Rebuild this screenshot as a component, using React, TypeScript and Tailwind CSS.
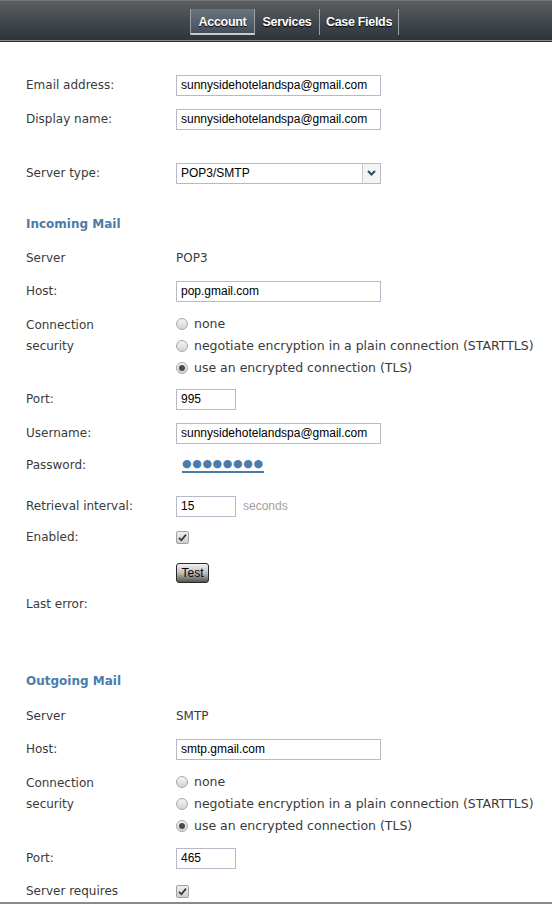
import type { ReactNode } from 'react'

const label = "font-['DejaVu_Sans',sans-serif] text-[12px] text-[#3a3a3a]"
const inputText = "font-['Liberation_Sans',Arial,sans-serif] text-[12px] text-black"

function Row({ name, mt, children }: { name: string; mt: string; children?: ReactNode }) {
  return (
    <div className={`flex h-[24px] items-center ${mt}`}>
      <div className={`w-[150px] shrink-0 ${label}`}>{name}</div>
      <div className="flex items-center">{children}</div>
    </div>
  )
}

function TextBox({ value, wide = true }: { value: string; wide?: boolean }) {
  return (
    <div
      className={`flex h-[21px] items-center border border-[#b8b8c8] bg-white pl-[4px] ${
        wide ? 'w-[205px]' : 'w-[60px]'
      } ${inputText}`}
    >
      {value}
    </div>
  )
}

function Radio({ checked, text }: { checked?: boolean; text: string }) {
  return (
    <div className="flex h-[22px] items-center">
      <span className="flex h-[12px] w-[12px] items-center justify-center rounded-full border border-[#a8a8a8] bg-gradient-to-b from-[#f4f4f4] to-[#d4d4d4]">
        {checked && <span className="h-[6px] w-[6px] rounded-full bg-[#4a4a4a]" />}
      </span>
      <span className="ml-[6px] font-['DejaVu_Sans',sans-serif] text-[12.5px] text-[#3a3a3a]">{text}</span>
    </div>
  )
}

function Check() {
  return (
    <span className="flex h-[13px] w-[13px] items-center justify-center rounded-[2px] border border-[#a0a0a0] bg-gradient-to-b from-[#f0f0f0] to-[#cfcfcf]">
      <svg width="9" height="9" viewBox="0 0 9 9">
        <path d="M1 4.8 L3.4 7.2 L8 1.6" fill="none" stroke="#3a3a3a" strokeWidth="1.8" />
      </svg>
    </span>
  )
}

function Security({ mt }: { mt: string }) {
  return (
    <div className={`flex ${mt}`}>
      <div className={`w-[150px] shrink-0 pt-[2px] leading-[21px] ${label}`}>
        Connection
        <br />
        security
      </div>
      <div className="flex flex-col">
        <Radio text="none" />
        <Radio text="negotiate encryption in a plain connection (STARTTLS)" />
        <Radio checked text="use an encrypted connection (TLS)" />
      </div>
    </div>
  )
}

function Heading({ text, mt }: { text: string; mt: string }) {
  return (
    <div
      className={`flex h-[24px] items-center font-['DejaVu_Sans',sans-serif] text-[12px] font-bold text-[#4a7cab] ${mt}`}
    >
      {text}
    </div>
  )
}

const tabs = [
  { name: 'Account', w: 'w-[64px]', active: true },
  { name: 'Services', w: 'w-[65px]', active: false },
  { name: 'Case Fields', w: 'w-[79px]', active: false },
]

export default function App() {
  return (
    <div className="h-[904px] overflow-hidden border-b-2 border-[#8a8a8a] bg-white">
      <div className="border-b border-[#2a2a2a]">
        <div className="flex h-[41px] items-center border-b border-[#8c8c8c] border-t border-t-[#777] bg-gradient-to-b from-[#5c5f62] to-[#2c343c]">
          <div className="ml-[190px] mt-[2px] flex h-[26px] border-l border-[#9aa0a6]">
            {tabs.map((t) => (
              <div
                key={t.name}
                className={`flex ${t.w} items-center justify-center border-r border-[#9aa0a6] pt-[1px] font-['Liberation_Sans',Arial,sans-serif] text-[12.5px] font-bold tracking-[-0.3px] text-white [text-shadow:0_1px_1px_#000] ${
                  t.active
                    ? 'border-b-2 border-b-[#c8ccd0] bg-gradient-to-b from-[#6a7480] to-[#454f5b] pt-[3px]'
                    : ''
                }`}
              >
                {t.name}
              </div>
            ))}
          </div>
        </div>
      </div>

      <div className="pl-[26px]">
        <Row name="Email address:" mt="mt-[31px]">
          <TextBox value="sunnysidehotelandspa@gmail.com" />
        </Row>
        <Row name="Display name:" mt="mt-[10px]">
          <TextBox value="sunnysidehotelandspa@gmail.com" />
        </Row>
        <Row name="Server type:" mt="mt-[30px]">
          <div className={`flex h-[21px] w-[205px] items-center border border-[#b8b8c8] ${inputText}`}>
            <span className="flex-1 pl-[4px]">POP3/SMTP</span>
            <span className="flex h-full w-[18px] items-center justify-center border-l border-[#c8c8d4] bg-[#f4f4f4]">
              <svg width="9" height="6" viewBox="0 0 9 6">
                <path d="M1 1 L4.5 4.5 L8 1" fill="none" stroke="#2e4a6a" strokeWidth="2" />
              </svg>
            </span>
          </div>
        </Row>

        <Heading text="Incoming Mail" mt="mt-[27px]" />
        <Row name="Server" mt="mt-[10px]">
          <span className={label}>POP3</span>
        </Row>
        <Row name="Host:" mt="mt-[9px]">
          <TextBox value="pop.gmail.com" />
        </Row>
        <Security mt="mt-[10px]" />
        <Row name="Port:" mt="mt-[8px]">
          <TextBox value="995" wide={false} />
        </Row>
        <Row name="Username:" mt="mt-[10px]">
          <TextBox value="sunnysidehotelandspa@gmail.com" />
        </Row>
        <Row name="Password:" mt="mt-[8px]">
          <span className="ml-[6px] border-b-2 border-[#4a7cab] font-['DejaVu_Sans',sans-serif] text-[11px] leading-[14px] tracking-[0.6px] text-[#4a7cab]">
            ●●●●●●●●
          </span>
        </Row>
        <Row name="Retrieval interval:" mt="mt-[17px]">
          <TextBox value="15" wide={false} />
          <span className="ml-[7px] font-['Liberation_Sans',Arial,sans-serif] text-[12px] text-[#a0a0a0]">seconds</span>
        </Row>
        <Row name="Enabled:" mt="mt-[7px]">
          <Check />
        </Row>
        <Row name="" mt="mt-[12px]">
          <button className="flex h-[20px] w-[33px] items-center justify-center rounded-[3px] border border-[#2a2a2a] bg-gradient-to-b from-[#f2f2f2] via-[#c0c0c0] to-[#58544e] font-['Liberation_Sans',Arial,sans-serif] text-[12px] text-black">
            Test
          </button>
        </Row>
        <Row name="Last error:" mt="mt-[7px]" />

        <Heading text="Outgoing Mail" mt="mt-[53px]" />
        <Row name="Server" mt="mt-[11px]">
          <span className={label}>SMTP</span>
        </Row>
        <Row name="Host:" mt="mt-[9px]">
          <TextBox value="smtp.gmail.com" />
        </Row>
        <Security mt="mt-[10px]" />
        <Row name="Port:" mt="mt-[9px]">
          <TextBox value="465" wide={false} />
        </Row>
        <Row name="Server requires" mt="mt-[9px]">
          <Check />
        </Row>
      </div>
    </div>
  )
}
